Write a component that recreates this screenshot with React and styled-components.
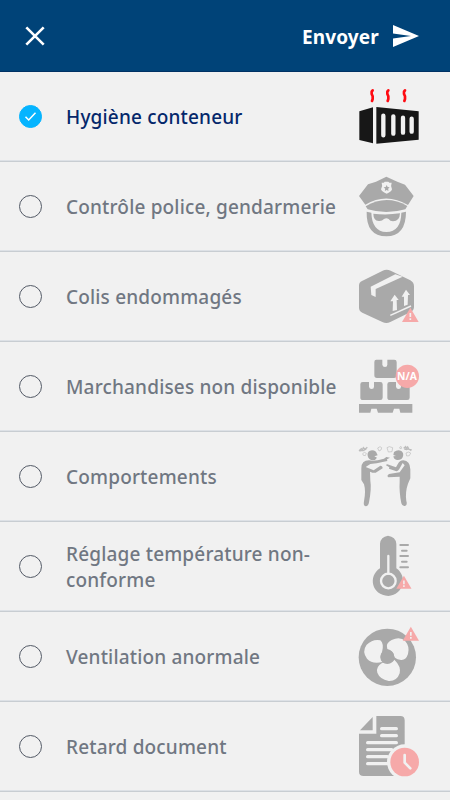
import React, { useState } from "react";
import styled, { createGlobalStyle } from "styled-components";

const GlobalStyle = createGlobalStyle`
  * { box-sizing: border-box; }
  body { margin: 0; background: #f1f1f1; overflow: hidden; }
`;

const Screen = styled.main`
  width: 450px;
  height: 800px;
  overflow: hidden;
  background: #f1f1f1;
  font-family: "Noto Sans", "Open Sans", sans-serif;
`;

const Header = styled.header`
  display: flex;
  align-items: center;
  justify-content: space-between;
  height: 72px;
  padding: 0 30px 0 24px;
  background: #004378;
  border-bottom: 1px solid #003264;
`;

const HeaderButton = styled.button`
  display: flex;
  align-items: center;
  gap: 13px;
  padding: 0;
  border: 0;
  background: none;
  color: #fff;
  font: 700 19px/26px "Noto Sans", "Open Sans", sans-serif;
  cursor: pointer;
  svg { display: block; }
`;

const SendLabel = styled.span`
  display: block;
  width: 77px;
  padding-top: 2px;
  letter-spacing: 0.1px;
  text-align: left;
  white-space: nowrap;
`;

const List = styled.ul`
  margin: 0;
  padding: 0;
  list-style: none;
`;

const Row = styled.li`
  display: flex;
  align-items: center;
  height: 90px;
  padding: 0 20px 1px 19px;
  border-bottom: 1px solid #c8cdd2;
  box-shadow: inset 0 -1px #dde1e6;
  cursor: pointer;
`;

const Radio = styled.span`
  display: flex;
  flex: none;
  align-items: center;
  justify-content: center;
  width: 23px;
  height: 23px;
  border: 1px solid ${(p) => (p.$on ? "#05b4ff" : "#535a66")};
  border-radius: 50%;
  background: ${(p) => (p.$on ? "#05b4ff" : "transparent")};
`;

const Label = styled.span`
  flex: none;
  width: 284px;
  margin-left: 24px;
  padding-top: 2px;
  color: ${(p) => (p.$on ? "#04276b" : "#707782")};
  font-size: 19px;
  font-weight: 500;
  letter-spacing: 0.17px;
  line-height: 26px;
`;

const Picture = styled.svg`
  display: block;
  flex: none;
  width: 80px;
  height: 88px;
`;

const GREY = "#a9a9a9";
const PINK = "#f6a9a9";
const PAPER = "#f1f1f1";

const Warning = ({ x, y, s = 1 }) => (
  <g transform={`translate(${x} ${y}) scale(${s})`}>
    <path d="M25 0L50 43H0z" fill={PINK} />
    <path d="M25 16v12M25 32v5" stroke={PAPER} strokeWidth="5" fill="none" />
  </g>
);

const Container = () => (
  <>
    <path d="M28 94L69 82V190L28 180zM79 81L206 94V179L79 191z" fill="#171717" />
    <path d="M100 107v59M130 109v52M159 113v45M185 116v39" stroke={PAPER} strokeWidth="13" strokeLinecap="round" />
    {[66, 113, 163].map((x) => (
      <path key={x} d={`M${x + 2} 31L${x - 1} 35V42L${x + 2} 49V57L${x} 63`} stroke="#ff0b12" strokeWidth="8" strokeLinecap="round" strokeLinejoin="round" fill="none" />
    ))}
  </>
);

const Police = () => (
  <>
    <path d="M109 26L142 41L165 50L191 84L174 111Q109 72 46 110L27 84L54 49L78 41z" fill={GREY} />
    <path d="M47 115Q109 78 172 114L166 124Q139 132 109 132Q80 132 53 124z" fill={GREY} />
    <path d="M50 131Q48 204 109 205Q168 204 168 131L154 134Q153 191 109 192Q66 190 64 134z" fill={GREY} />
    <path d="M70 137Q109 142 150 136Q149 160 129 160Q120 160 116 153Q109 148 102 153Q96 160 86 159Q70 157 70 137z" fill={GREY} />
    <path d="M95 44Q101 46 104 41H115Q119 46 125 44Q121 54 126 64Q123 73 110 77Q97 73 93 64Q99 54 95 44z" fill={PAPER} />
    <path d="M110 51l3 6 6 1-4.500 4 1 7-5.500-3-5.500 3 1-7-4.500-4 6-1z" fill={GREY} />
  </>
);

const Parcel = () => (
  <>
    <path d="M36 63L98 32Q110 27 122 32L181 61Q192 67 192 79V141Q192 151 182 156L121 186Q109 192 97 186L37 158Q27 153 27 143V77Q27 67 36 63z" fill={GREY} />
    <path d="M62 80L136 43L158 50L77 87V111L64 105z" fill={PAPER} />
    <path d="M134 104L146 120H140L141 150L128 153L129 124H121zM168 89L180 105H174L173 134L162 138V110H155z" fill={PAPER} />
    <path d="M121 166L183 138" stroke={PAPER} strokeWidth="4.5" />
    <Warning x="156" y="143" />
  </>
);

const Pallet = () => (
  <>
    <path d="M79 29H97V44Q98 51 105 51Q112 51 112 44V29H133Q140 29 140 36V76Q140 84 132 84H81Q73 84 73 76V36Q73 29 79 29z" fill={GREY} />
    {[31, 112].map((x) => (
      <path key={x} transform={`translate(${x} 96)`} d="M7 0H26V14Q27 21 34 21Q41 21 41 14V0H60Q67 0 67 7V47Q67 54 60 54H8Q0 54 0 47V7Q0 0 7 0z" fill={GREY} />
    ))}
    <path d="M27 162H187V188H151L148 176H132L128 188H84L80 176H64L61 188H27z" fill={GREY} />
    <circle cx="172" cy="79" r="35" fill={PINK} />
    <text x="171" y="89" fill="#fff" fontFamily="Open Sans, sans-serif" fontSize="31" fontWeight="700" textAnchor="middle">N/A</text>
  </>
);

const Dispute = () => (
  <>
    <path d="M78 41Q69 35 60 38Q51 42 53 53Q55 64 67 67Q77 67 81 59L73 55L83 52zM132 42Q143 33 154 39Q163 46 158 58Q154 67 141 66Q131 64 130 55L138 54L130 51z" fill={GREY} />
    <path d="M34 91Q34 67 57 67Q73 71 102 62L109 57L120 59L111 64L112 69L80 76L61 78L47 87L71 97L91 83Q98 83 98 91L77 104Q71 106 60 101L61 128Q65 150 57 193Q55 205 47 205Q39 204 42 190Q48 159 42 139L34 126z" fill={GREY} />
    <path d="M181 94Q180 68 160 67Q149 67 143 79L138 88L112 79L107 81L118 88L117 92L137 99Q144 101 148 93L158 75L164 82L149 103L117 108Q109 114 115 118L149 116V131Q147 160 154 196Q157 206 165 204Q173 201 169 189Q165 162 174 137L181 121z" fill={GREY} />
    <g fill="none" stroke="#bcbcbc" strokeWidth="2">
      <path d="M83 30l7-4 5 3-2 7-6 3zM38 47l5-4 6 3-3 7-6-1zM111 29l7-3 10 3-2 12-11 1zM149 28l4-3 2 6-5 1zM168 45l7-3 7 3-4 8-8 1z" />
      <path d="M27 38l7-6 3 4 3-7 5 5 7-6M161 31l6-5 2 6 4-5 4 7 8 1M28 39l7-2 5 1 9-5M163 33l7 2 5-2 9 5" strokeWidth="4" />
    </g>
  </>
);

const Thermometer = () => (
  <>
    <path d="M90 47Q92 26 114 23Q137 26 139 47V121C174 145 161 201 115 204C65 202 53 145 90 121z" fill={GREY} />
    <circle cx="115" cy="159" r="22" fill="none" stroke={PAPER} strokeWidth="7" />
    <path d="M115 84V137" stroke={PAPER} strokeWidth="7" strokeLinecap="round" />
    <path d="M151 51h23M156 68h14M151 84h23M156 101h14M151 118h23" stroke={GREY} strokeWidth="6" strokeLinecap="round" />
    <Warning x="139" y="143" s={0.91} />
  </>
);

const Fan = () => (
  <>
    <circle cx="112" cy="118" r="86" fill={GREY} />
    <path d="M96 103Q103 77 91 67Q69 62 50 80Q35 100 51 122Q66 139 97 132Q87 118 96 103zM112 93Q106 75 125 66Q151 54 166 70Q180 86 174 108Q167 129 150 125Q134 122 132 113Q130 98 112 93zM97 134Q76 147 82 164Q89 183 116 189Q141 190 149 166Q154 145 133 125Q126 138 97 134z" fill={PAPER} />
    <circle cx="112" cy="117" r="21" fill={GREY} />
    <Warning x="158" y="26" s={0.98} />
  </>
);

const Document = () => (
  <>
    <path d="M68 27V67H30zM79 24H151Q164 24 164 37V204H41Q27 204 27 191V77H79z" fill={GREY} />
    <path d="M95 62H139M95 83H139M53 104H139M53 125H125M53 146H112M53 167H112" stroke={PAPER} strokeWidth="10" strokeLinecap="round" />
    <circle cx="164" cy="162" r="53" fill={PAPER} />
    <circle cx="164" cy="162" r="43" fill={PINK} />
    <path d="M164 141V164L181 181" stroke={PAPER} strokeWidth="8" strokeLinecap="round" strokeLinejoin="round" fill="none" />
  </>
);

const items = [
  { label: "Hygiène conteneur", Art: Container, top: -24 },
  { label: "Contrôle police, gendarmerie", Art: Police, top: -18 },
  { label: "Colis endommagés", Art: Parcel, top: -24 },
  { label: "Marchandises non disponible", Art: Pallet, top: -24 },
  { label: "Comportements", Art: Dispute, top: -18 },
  { label: "Réglage température non-conforme", Art: Thermometer, top: -18 },
  { label: "Ventilation anormale", Art: Fan, top: -18 },
  { label: "Retard document", Art: Document, top: -18 },
];

export default function App() {
  const [selected, setSelected] = useState(0);
  return (
    <Screen>
      <GlobalStyle />
      <Header>
        <HeaderButton aria-label="Fermer">
          <svg width="22" height="22" viewBox="0 0 22 22">
            <path d="M2.3 2.3L19.7 19.7M19.7 2.3L2.3 19.7" stroke="#fff" strokeWidth="2.6" />
          </svg>
        </HeaderButton>
        <HeaderButton>
          <SendLabel>Envoyer</SendLabel>
          <svg width="28" height="24" viewBox="0 0 28 24">
            <path d="M1 1L27 12L1 23V14.5L19 12L1 9.500z" fill="#fff" />
          </svg>
        </HeaderButton>
      </Header>
      <List>
        {items.map(({ label, Art, top }, i) => (
          <Row key={label} onClick={() => setSelected(i)}>
            <Radio $on={selected === i}>
              {selected === i && (
                <svg width="13" height="11" viewBox="0 0 13 11">
                  <path d="M1.5 5.8L4.7 9L11.500 1.7" fill="none" stroke="#fff" strokeWidth="1.5" />
                </svg>
              )}
            </Radio>
            <Label $on={selected === i}>{label}</Label>
            <Picture viewBox={`0 ${top} 240 264`}>
              <Art />
            </Picture>
          </Row>
        ))}
      </List>
    </Screen>
  );
}
